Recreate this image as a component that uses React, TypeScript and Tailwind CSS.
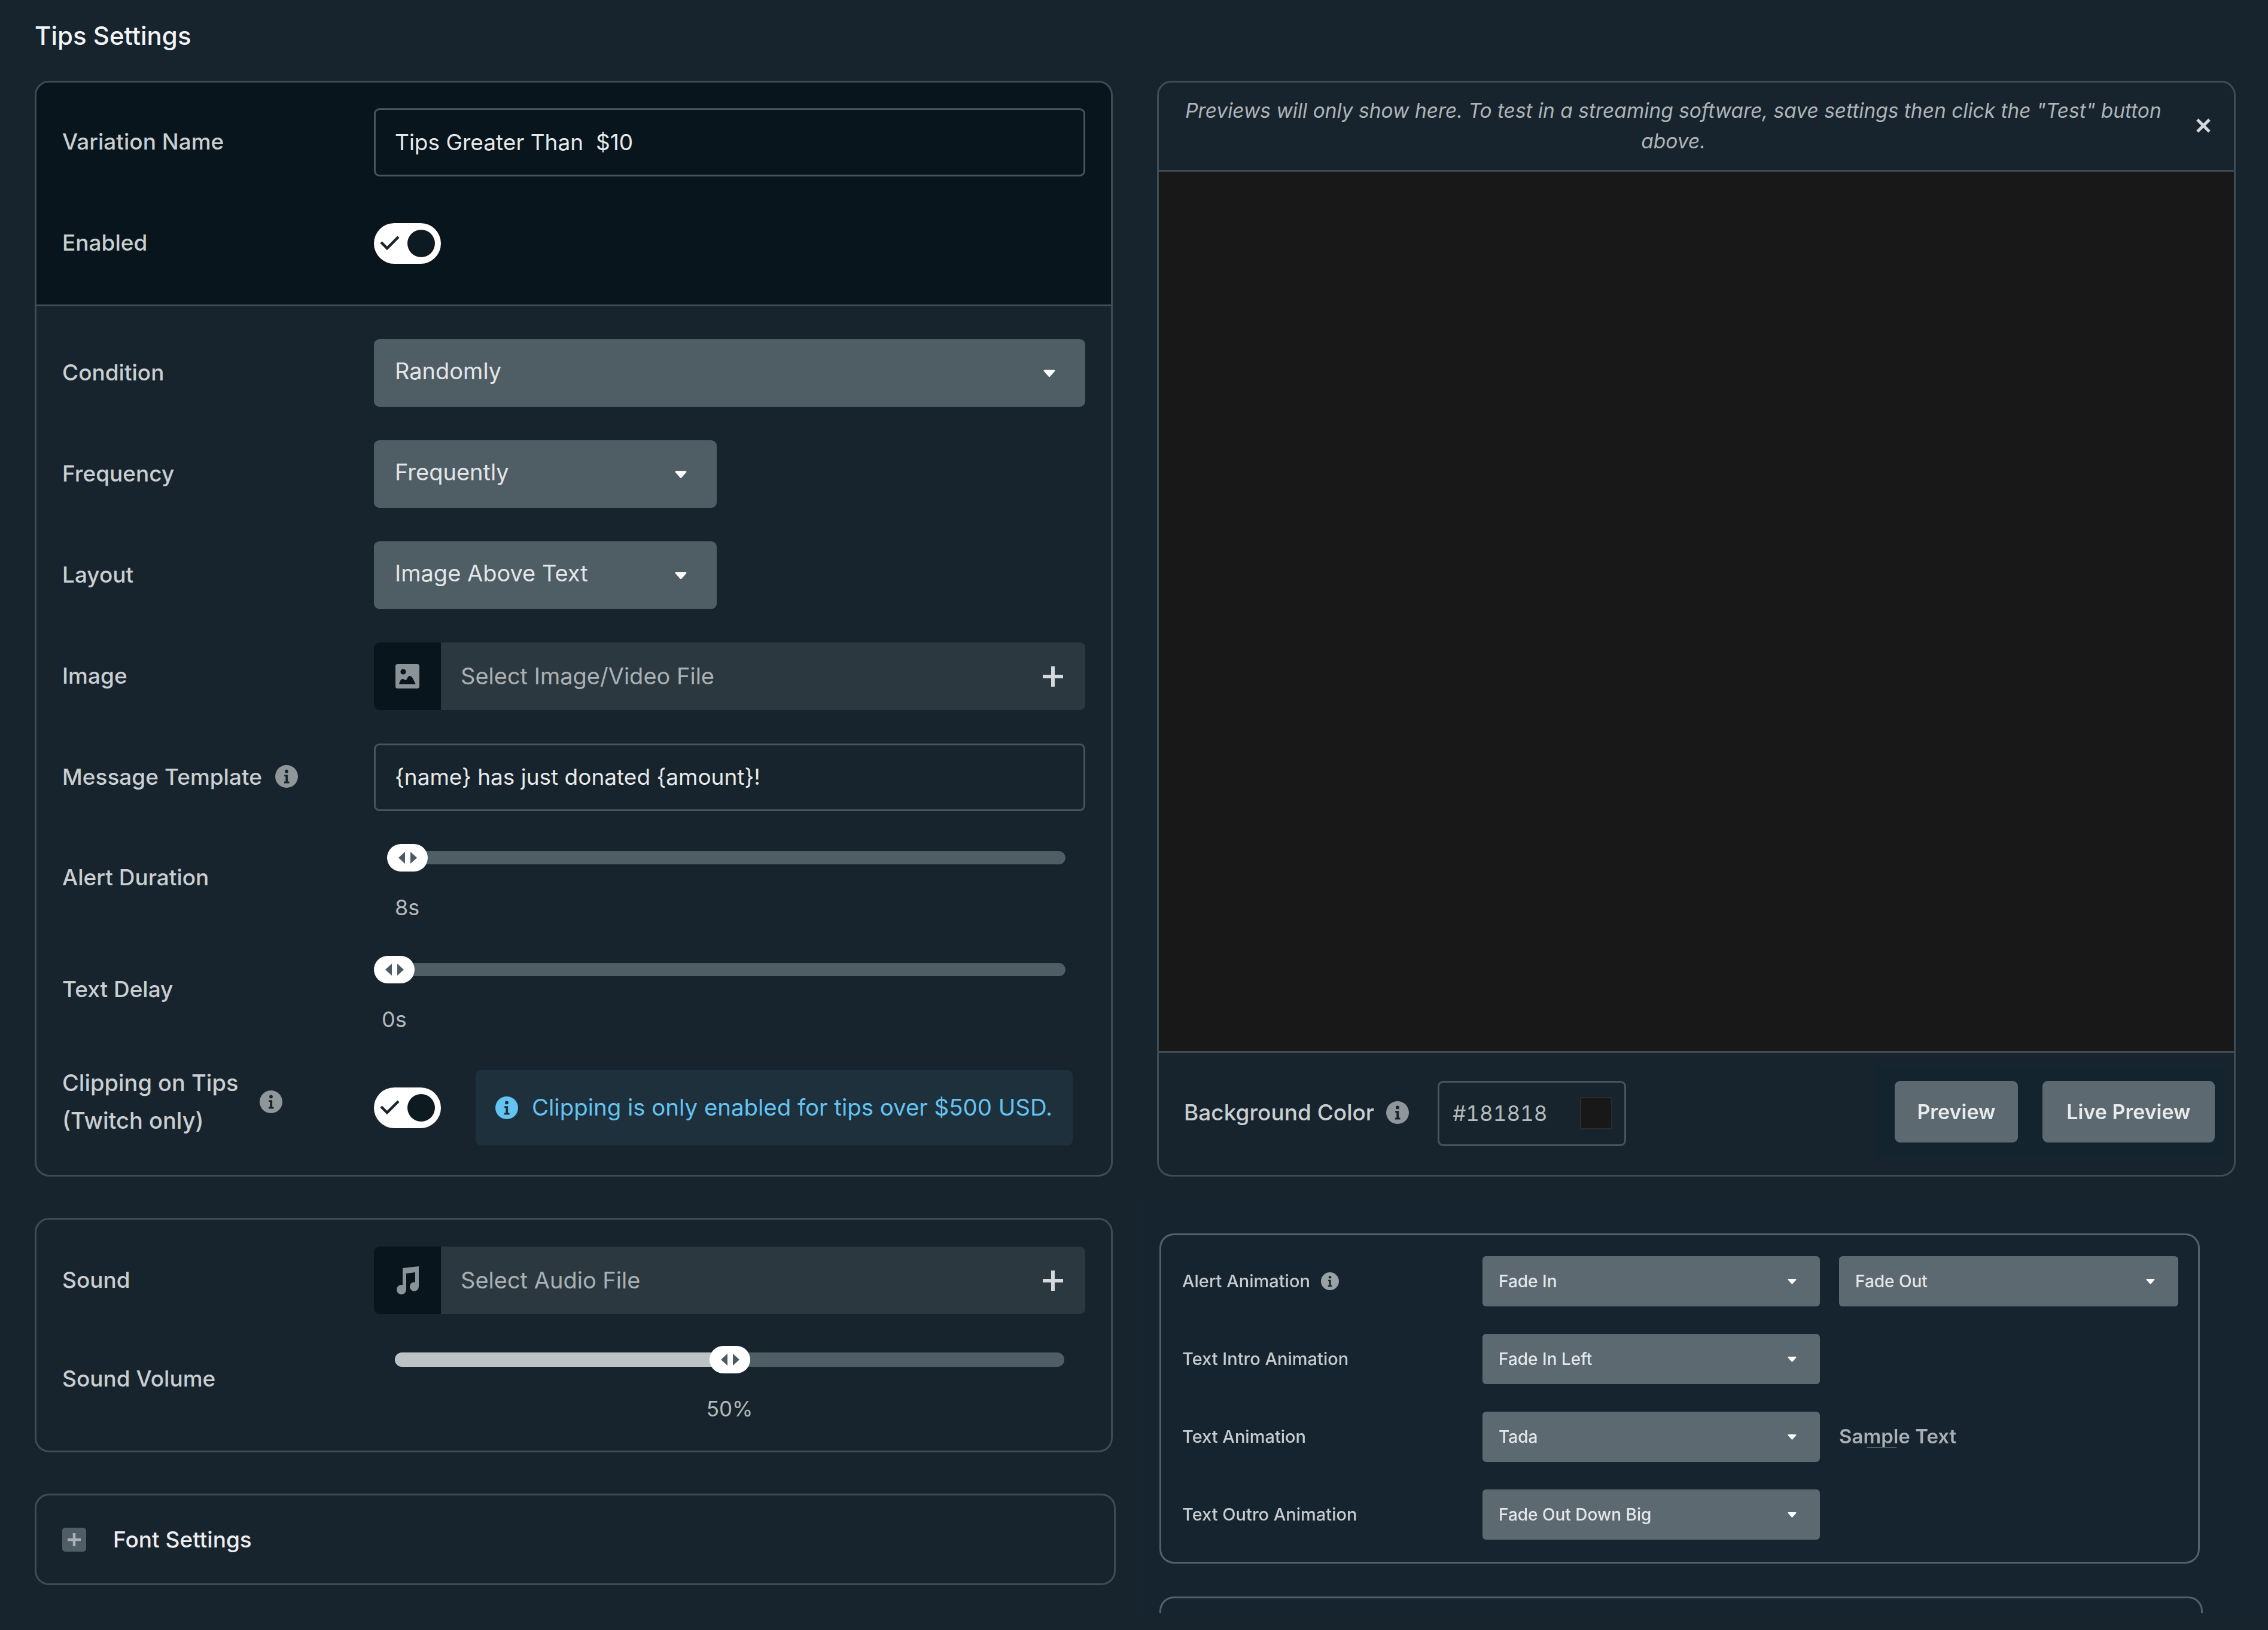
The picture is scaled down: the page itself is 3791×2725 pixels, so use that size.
import React from "react";

const Info = ({ size = 38, fill = "#8f979b", dark = "#18242d" }: { size?: number; fill?: string; dark?: string }) => (
  <svg width={size} height={size} viewBox="0 0 16 16" className="shrink-0">
    <circle cx="8" cy="8" r="8" fill={fill} />
    <circle cx="8" cy="4.4" r="1.2" fill={dark} />
    <path d="M6.4 6.8h2.5v4.8h1v1.2H6.3v-1.2h1V8H6.4z" fill={dark} />
  </svg>
);

const Caret = ({ size = 20 }: { size?: number }) => (
  <svg width={size} height={size * 0.7} viewBox="0 0 10 7" className="shrink-0">
    <path d="M1 .6h8c.6 0 .9.6.6 1.1L5.6 6.2c-.3.4-.9.4-1.2 0L.4 1.7C.1 1.2.4.6 1 .6z" fill="#ffffff" />
  </svg>
);

const Plus = ({ size = 34, color = "#d5d9db", weight = 6 }: { size?: number; color?: string; weight?: number }) => (
  <svg width={size} height={size} viewBox="0 0 34 34" className="shrink-0">
    <path d="M17 1v32M1 17h32" stroke={color} strokeWidth={weight} strokeLinecap="round" />
  </svg>
);

const Toggle = () => (
  <div className="relative w-[112px] h-[68px] rounded-full bg-white shrink-0">
    <svg width="36" height="28" viewBox="0 0 36 28" className="absolute left-[9px] top-[19px]">
      <path d="M3 13l10 10L32 4" fill="none" stroke="#18242d" strokeWidth="4.5" />
    </svg>
    <div className="absolute left-[56px] top-[11px] w-[46px] h-[46px] rounded-full bg-[#0e1a21]" />
  </div>
);

const Thumb = () => (
  <div className="w-[68px] h-[46px] rounded-full bg-white flex items-center justify-center gap-[7px]">
    <svg width="13" height="22" viewBox="0 0 13 22"><path d="M12 1v20L1 11z" fill="#4c5a62" /></svg>
    <svg width="13" height="22" viewBox="0 0 13 22"><path d="M1 1v20l11-10z" fill="#4c5a62" /></svg>
  </div>
);

const Label = ({ children }: { children: React.ReactNode }) => (
  <div className="w-[521px] shrink-0 pb-[3px] text-[37px] font-medium leading-[63px] text-[#c9ced1]">{children}</div>
);

const Select = ({ value, wide }: { value: string; wide?: boolean }) => (
  <div className={`${wide ? "w-[1189px]" : "w-[573px]"} h-[113px] rounded-[9px] bg-[#4f5d64] pl-[35px] pr-[50px] flex items-center justify-between`}>
    <span className="text-[38px] text-[#e3e6e8] pb-[7px]">{value}</span>
    <Caret />
  </div>
);

const FilePick = ({ icon, text }: { icon: React.ReactNode; text: string }) => (
  <div className="w-[1189px] h-[113px] rounded-[9px] bg-[#2c3840] flex items-center overflow-hidden">
    <div className="w-[112px] h-full bg-[#08151c] flex items-center justify-center shrink-0">{icon}</div>
    <span className="ml-[33px] flex-1 text-[38px] text-[#aab1b5]">{text}</span>
    <div className="mr-[37px] flex"><Plus /></div>
  </div>
);

const SliderRow = ({ label, value, first }: { label: string; value: string; first?: boolean }) => (
  <div className="flex h-[135px]">
    <div className="self-center"><Label>{label}</Label></div>
    <div className="flex-1">
      <div className="relative h-[68px] w-[1156px] flex items-center pl-[35px]">
        <div className="h-[22px] flex-1 rounded-full bg-[#4f5d64]" />
        <div className={`absolute top-[11px] ${first ? "left-[22px]" : "left-0"}`}><Thumb /></div>
      </div>
      <div className={`mt-[24px] text-[36px] leading-[50px] text-[#b3b9bc] ${first ? "pl-[35px]" : "pl-[13px]"}`}>{value}</div>
    </div>
  </div>
);

const AnimSelect = ({ value, long }: { value: string; long?: boolean }) => (
  <div className={`${long ? "w-[567px]" : "w-[564px]"} h-[84px] rounded-[6px] bg-[#5c6970] pl-[27px] pr-[39px] flex items-center justify-between`}>
    <span className="text-[28px] font-medium text-[#e4e7e9]">{value}</span>
    <Caret size={15} />
  </div>
);

const AnimRow = ({ label, info, children }: { label: string; info?: boolean; children: React.ReactNode }) => (
  <div className="flex items-center h-[84px]">
    <div className="w-[502px] flex items-center gap-[18px] text-[29px] font-medium text-[#c6cbce]">
      {label}
      {info && <Info size={30} fill="#9aa1a5" dark="#162430" />}
    </div>
    {children}
  </div>
);

export default function App() {
  return (
    <div className="w-[3791px] h-[2725px] overflow-hidden bg-[#18242d] font-['Inter','Liberation_Sans',sans-serif]">
      <div className="pl-[58px] h-[135px] pt-[30px]">
        <h1 className="text-[42px] leading-[60px] font-medium text-[#f1f3f4]">Tips Settings</h1>
      </div>

      <div className="flex">
        {/* left column */}
        <div className="w-[1900px] pl-[58px] shrink-0">
          <section className="w-[1802px] h-[1832px] rounded-[24px] border-[3px] border-[#3e4c54] overflow-hidden">
            <div className="bg-[#08151c] h-[374px] border-b-[3px] border-[#3e4c54] pl-[43px] pt-[43px]">
              <div className="flex items-center h-[114px]">
                <Label>Variation Name</Label>
                <div className="w-[1189px] h-[114px] rounded-[9px] border-[3px] border-[#46545c] pl-[32px] flex items-center text-[37px] text-[#e6e9ea] whitespace-pre">
                  Tips Greater Than  $10
                </div>
              </div>
              <div className="flex items-center h-[114px] mt-[55px]">
                <Label>Enabled</Label>
                <Toggle />
              </div>
            </div>

            <div className="pl-[43px] pt-[55px] flex flex-col">
              <div className="flex flex-col gap-[56px]">
                <div className="flex items-center"><Label>Condition</Label><Select value="Randomly" wide /></div>
                <div className="flex items-center"><Label>Frequency</Label><Select value="Frequently" /></div>
                <div className="flex items-center"><Label>Layout</Label><Select value="Image Above Text" /></div>
                <div className="flex items-center">
                  <Label>Image</Label>
                  <FilePick
                    text="Select Image/Video File"
                    icon={
                      <svg width="40" height="41" viewBox="0 0 40 41">
                        <rect width="40" height="41" rx="4" fill="#8a9398" />
                        <circle cx="13" cy="13" r="4.6" fill="#08151c" />
                        <path d="M6 34c1-5 3-9 6-9 2 0 3 2 5 2 2.500 0 3-7 7-7 4.500 0 7 9 10 14z" fill="#08151c" />
                      </svg>
                    }
                  />
                </div>
                <div className="flex items-center">
                  <div className="w-[521px] shrink-0 pb-[3px] flex items-center gap-[22px]">
                    <span className="text-[37px] font-medium leading-[63px] text-[#c9ced1]">Message Template</span>
                    <Info />
                  </div>
                  <div className="w-[1189px] h-[113px] rounded-[9px] border-[3px] border-[#46545c] pl-[32px] pb-[2px] flex items-center text-[37px] text-[#e6e9ea]">
                    {"{name} has just donated {amount}!"}
                  </div>
                </div>
              </div>

              <div className="mt-[44px]"><SliderRow label="Alert Duration" value="8s" first /></div>
              <div className="mt-[52px]"><SliderRow label="Text Delay" value="0s" /></div>

              <div className="flex items-center mt-[67px] h-[126px]">
                <div className="w-[521px] shrink-0 flex items-center gap-[36px] -mt-[20px]">
                  <div className="text-[38px] font-medium leading-[63px] text-[#c9ced1]">
                    Clipping on Tips
                    <br />
                    (Twitch only)
                  </div>
                  <Info />
                </div>
                <Toggle />
                <div className="ml-[58px] w-[998px] h-[126px] rounded-[9px] bg-[#1e303c] flex items-center pl-[33px] gap-[23px] text-[38.400px] text-[#63c4f2]">
                  <Info fill="#63c4f2" dark="#1e303c" />
                  <span className="whitespace-nowrap">Clipping is only enabled for tips over $500 USD.</span>
                </div>
              </div>
            </div>
          </section>

          <section className="mt-[69px] w-[1802px] h-[392px] rounded-[24px] border-[3px] border-[#3e4c54] pl-[43px] pt-[45px]">
            <div className="flex items-center">
              <Label>Sound</Label>
              <FilePick
                text="Select Audio File"
                icon={
                  <svg width="42" height="50" viewBox="0 0 42 50">
                    <path d="M13 4l27-3v34h-.1a7.500 7.500 0 1 1-5.900-7.300V11l-15 2v27a8 8 0 1 1-6-7.700z" fill="#8a9398" />
                  </svg>
                }
              />
            </div>
            <div className="flex mt-[52px]">
              <div className="self-start mt-[24px]"><Label>Sound Volume</Label></div>
              <div className="w-[1189px]">
                <div className="relative h-[48px] mx-[35px] flex items-center">
                  <div className="h-[24px] w-full rounded-full bg-[#4f5d64] overflow-hidden">
                    <div className="h-full w-1/2 bg-[#bdc3c5]" />
                  </div>
                  <div className="absolute left-[526px] top-[1px]"><Thumb /></div>
                </div>
                <div className="mt-[33px] text-center text-[35px] leading-[50px] text-[#b3b9bc]">50%</div>
              </div>
            </div>
          </section>

          <section className="mt-[69px] w-[1807px] h-[153px] rounded-[24px] border-[3px] border-[#3e4c54] pl-[43px] flex items-center gap-[45px]">
            <div className="w-[40px] h-[40px] rounded-[5px] bg-[#4f5d64] flex items-center justify-center">
              <Plus size={22} color="#aab1b5" weight={7} />
            </div>
            <span className="text-[37px] font-medium text-[#eceef0]">Font Settings</span>
          </section>
        </div>

        {/* right column */}
        <div className="flex-1">
          <section className="ml-[34px] w-[1803px] h-[1832px] rounded-[24px] border-[3px] border-[#3e4c54] flex flex-col overflow-hidden">
            <div className="relative h-[149px] border-b-[3px] border-[#3e4c54] shrink-0 flex items-center">
              <p className="w-[1720px] text-center italic text-[33.500px] leading-[51px] text-[#aeb4b8]">
                Previews will only show here. To test in a streaming software, save settings then click the "Test" button above.
              </p>
              <svg width="26" height="26" viewBox="0 0 26 26" className="absolute right-[38px] top-[59px]">
                <path d="M3 3l20 20M23 3L3 23" stroke="#d5d9db" strokeWidth="5" />
              </svg>
            </div>
            <div className="flex-1 bg-[#181818]" />
            <div className="h-[207px] border-t-[3px] border-[#3e4c54] shrink-0 flex items-center pl-[42px] relative">
              <span className="text-[37px] font-medium text-[#c9ced1] -mt-[4px]">Background Color</span>
              <div className="ml-[20px] -mt-[4px]"><Info /></div>
              <div className="ml-[48px] w-[315px] h-[109px] -mt-[2px] rounded-[9px] border-[3px] border-[#46545c] pl-[22px] pr-[20px] flex items-center justify-between">
                <span className="text-[35px] text-[#b3b9bc] tabular-nums">#181818</span>
                <div className="w-[54px] h-[54px] rounded-[4px] bg-[#181818] border-[2px] border-[#2c2c2c]" />
              </div>
              <div className="absolute right-[16px] top-[21px] h-[155px] w-[584px] bg-[#14242f] flex items-center justify-end gap-[41px] pr-[16px]">
                <div className="w-[206px] h-[103px] rounded-[9px] bg-[#5c6970] flex items-center justify-center text-[34px] font-semibold text-[#e8ebec] blur-[0.6px]">Preview</div>
                <div className="w-[288px] h-[103px] rounded-[9px] bg-[#5c6970] flex items-center justify-center text-[34px] font-semibold text-[#e8ebec] blur-[0.6px]">Live Preview</div>
              </div>
            </div>
          </section>

          <div className="mt-[38px] h-[692px] overflow-hidden bg-[#162430] pl-[38px] pt-[57px]">
            <section className="w-[1739px] h-[552px] rounded-[24px] border-[3px] border-[#53616a] pl-[35px] pt-[35px] flex flex-col gap-[46px] blur-[0.7px]">
              <AnimRow label="Alert Animation" info>
                <AnimSelect value="Fade In" />
                <div className="ml-[32px]"><AnimSelect value="Fade Out" long /></div>
              </AnimRow>
              <AnimRow label="Text Intro Animation"><AnimSelect value="Fade In Left" /></AnimRow>
              <AnimRow label="Text Animation">
                <AnimSelect value="Tada" />
                <span className="relative ml-[32px] text-[33px] font-semibold text-[#a9afb3]">
                  Sample Text
                  <span className="absolute left-[46px] top-[42px] w-[50px] h-[2px] bg-[#4a5f66]" />
                </span>
              </AnimRow>
              <AnimRow label="Text Outro Animation"><AnimSelect value="Fade Out Down Big" /></AnimRow>
            </section>
            <section className="mt-[55px] w-[1744px] h-[80px] rounded-t-[24px] border-[3px] border-b-0 border-[#53616a]" />
          </div>
        </div>
      </div>
    </div>
  );
}
